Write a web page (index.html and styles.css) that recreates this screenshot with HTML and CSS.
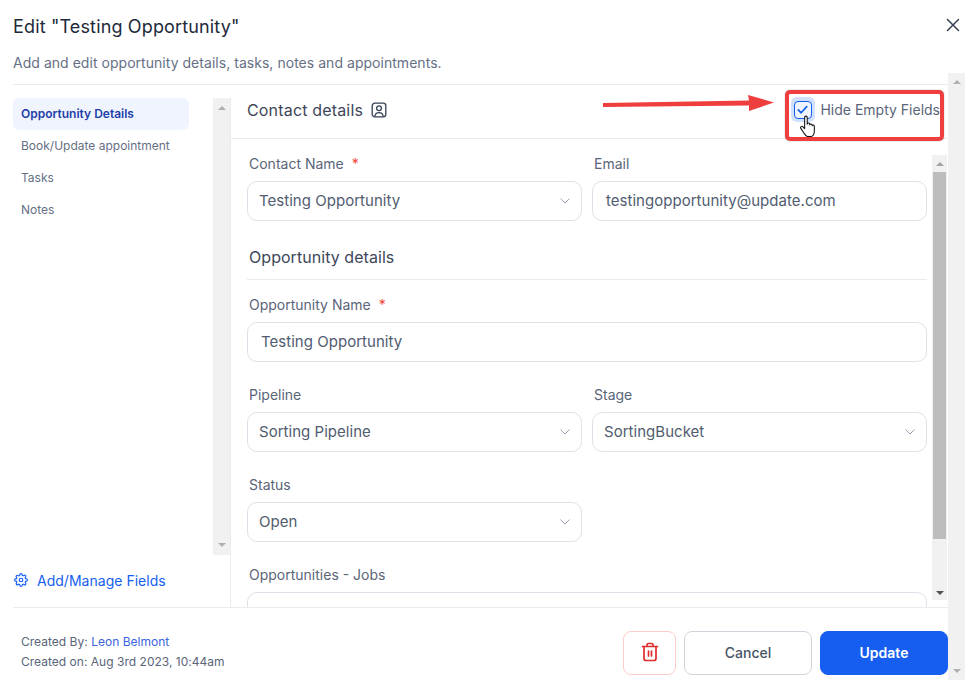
FILE: index.html
```html
<!DOCTYPE html>
<html lang="en">
<head>
<meta charset="utf-8">
<title>Edit Opportunity</title>
<link rel="stylesheet" href="styles.css">
</head>
<body>
<div class="page">
  <div class="modal">
    <header class="modal-head">
      <h1 class="title">Edit "Testing Opportunity"</h1>
      <p class="subtitle">Add and edit opportunity details, tasks, notes and appointments.</p>
    </header>
    <div class="modal-body">
      <aside class="side">
        <div class="side-inner">
          <div class="side-top">
            <nav class="nav">
              <a class="nav-item nav-active">Opportunity Details</a>
              <a class="nav-item">Book/Update appointment</a>
              <a class="nav-item">Tasks</a>
              <a class="nav-item">Notes</a>
            </nav>
            <div class="sb sb-side">
              <span class="tri tri-up"></span>
              <span class="tri tri-down"></span>
            </div>
          </div>
          <a class="manage">
            <svg class="gear" viewBox="0 0 24 24" fill="none" stroke="#155eef" stroke-width="2" stroke-linejoin="round"><circle cx="12" cy="12" r="3"/><path d="M19.4 15a1.65 1.65 0 0 0 .33 1.82l.06.06a2 2 0 1 1-2.83 2.83l-.06-.06a1.65 1.65 0 0 0-2.82 1.17V21a2 2 0 1 1-4 0v-.09A1.65 1.65 0 0 0 7.27 19.7l-.06.06a2 2 0 1 1-2.83-2.83l.06-.06a1.65 1.65 0 0 0-1.17-2.82H3a2 2 0 1 1 0-4h.09A1.65 1.65 0 0 0 4.3 7.27l-.06-.06a2 2 0 1 1 2.83-2.83l.06.06a1.65 1.65 0 0 0 2.82-1.17V3a2 2 0 1 1 4 0v.09a1.65 1.65 0 0 0 2.82 1.17l.06-.06a2 2 0 1 1 2.83 2.83l-.06.06a1.65 1.65 0 0 0 1.17 2.82H21a2 2 0 1 1 0 4h-.09a1.65 1.65 0 0 0-1.51 1.09z"/></svg>
            <span>Add/Manage Fields</span>
          </a>
        </div>
      </aside>
      <main class="main">
        <div class="main-head">
          <div class="contact-title">
            <span>Contact details</span>
            <svg class="contact-icon" viewBox="0 0 16 16" fill="none" stroke="#344054" stroke-width="1.300"><rect x="1.200" y="1.200" width="13.600" height="13.600" rx="2.600"/><circle cx="8" cy="6.200" r="2.400"/><path d="M3.800 14.400c.4-2.600 2-3.700 4.200-3.700s3.800 1.100 4.200 3.700"/></svg>
          </div>
          <label class="hide-empty">
            <span class="check-halo">
              <span class="check-box">
                <svg viewBox="0 0 16 16" fill="none" stroke="#155eef" stroke-width="1.800" stroke-linecap="round" stroke-linejoin="round"><path d="M3.500 8.500l3 3 6-6.500"/></svg>
              </span>
            </span>
            <span>Hide Empty Fields</span>
          </label>
        </div>
        <div class="scroll-pane">
          <form class="form">
            <div class="row">
              <div class="field">
                <div class="label">Contact Name <span class="req">*</span></div>
                <div class="input select"><span>Testing Opportunity</span><svg class="chev" viewBox="0 0 10 6" fill="none" stroke="#98a2b3" stroke-width="1"><path d="M.5.500 5 5 9.500.5"/></svg></div>
              </div>
              <div class="field">
                <div class="label">Email</div>
                <div class="input input-text">testingopportunity@update.com</div>
              </div>
            </div>
            <h2 class="section">Opportunity details</h2>
            <div class="field">
              <div class="label">Opportunity Name <span class="req">*</span></div>
              <div class="input input-text">Testing Opportunity</div>
            </div>
            <div class="row row-gap">
              <div class="field">
                <div class="label">Pipeline</div>
                <div class="input select"><span>Sorting Pipeline</span><svg class="chev" viewBox="0 0 10 6" fill="none" stroke="#98a2b3" stroke-width="1"><path d="M.5.500 5 5 9.500.5"/></svg></div>
              </div>
              <div class="field">
                <div class="label">Stage</div>
                <div class="input select"><span>SortingBucket</span><svg class="chev" viewBox="0 0 10 6" fill="none" stroke="#98a2b3" stroke-width="1"><path d="M.5.500 5 5 9.500.5"/></svg></div>
              </div>
            </div>
            <div class="row row-gap">
              <div class="field">
                <div class="label">Status</div>
                <div class="input select"><span>Open</span><svg class="chev" viewBox="0 0 10 6" fill="none" stroke="#98a2b3" stroke-width="1"><path d="M.5.500 5 5 9.500.5"/></svg></div>
              </div>
            </div>
            <div class="field row-gap">
              <div class="label">Opportunities - Jobs</div>
              <div class="input"></div>
            </div>
          </form>
          <div class="sb sb-inner">
            <span class="tri tri-up tri-dark"></span>
            <span class="thumb"></span>
            <span class="tri tri-down tri-dark"></span>
          </div>
        </div>
      </main>
    </div>
    <footer class="foot">
      <div class="meta">
        <div>Created By: <a class="meta-link">Leon Belmont</a></div>
        <div>Created on: Aug 3rd 2023, 10:44am</div>
      </div>
      <div class="actions">
        <button class="btn btn-del" type="button" aria-label="Delete">
          <svg viewBox="0 0 18 20" width="18" height="20" fill="none" stroke="#e02d2d" stroke-width="1.700" stroke-linecap="round" stroke-linejoin="round"><path d="M1.500 4.500h15M6 4.500V3a1.500 1.500 0 0 1 1.500-1.500h3A1.500 1.500 0 0 1 12 3v1.500M3 4.500v12A2 2 0 0 0 5 18.500h8a2 2 0 0 0 2-2v-12M7.500 9v5M10.500 9v5"/></svg>
        </button>
        <button class="btn btn-cancel" type="button">Cancel</button>
        <button class="btn btn-update" type="button">Update</button>
      </div>
    </footer>
  </div>
  <div class="right-rail">
    <svg class="close" viewBox="0 0 14 14" fill="none" stroke="#344054" stroke-width="1.500" stroke-linecap="round"><path d="M1.500 1.500l11 11M12.500 1.500l-11 11"/></svg>
    <div class="sb sb-outer">
      <span class="tri tri-up"></span>
      <span class="tri tri-down"></span>
    </div>
  </div>

  <div class="highlight"></div>
  <svg class="arrow" viewBox="0 0 180 20" fill="#ef3e3e"><path d="M0 9 L146 6.500 L145 1 L171 8.500 L146 17 L146 11.500 L0 13 Z"/></svg>
  <svg class="hand" viewBox="0 0 18 24" fill="#fff" stroke="#111" stroke-width="1.100" stroke-linejoin="round"><path d="M5.500 2.500c0-1.800 2.700-1.800 2.700 0v7c.3-1.600 2.600-1.500 2.600 0v.8c.3-1.400 2.500-1.300 2.500.2v.8c.4-1.200 2.300-1 2.300.5v5.200c0 2.800-1.600 5-3.200 5.500H8.200c-1.400-.6-2.500-2.300-3.600-3.900L1.500 14c-1-1.600.9-3 2.200-1.700l1.800 1.900z"/></svg>
</div>
</body>
</html>
```
FILE: styles.css
```css
* { box-sizing: border-box; }
html, body { margin: 0; padding: 0; }
body { background: #fff; font-family: Inter, "Liberation Sans", sans-serif; color: #344054; }
.page { position: relative; width: 973px; height: 694px; overflow: hidden; display: flex; background: #fff; }
.modal { width: 948px; padding-left: 13px; display: flex; flex-direction: column; height: 694px; }
.modal-head { height: 85px; border-bottom: 1px solid #e9ebef; padding-top: 16px; }
.title { margin: 0; font-size: 18px; line-height: 22px; font-weight: 400; letter-spacing: .15px; color: #1d2939; }
.subtitle { margin: 15px 0 0; font-size: 14px; line-height: 20px; font-weight: 400; letter-spacing: .035px; color: #667085; }

.modal-body { display: flex; height: 523px; border-bottom: 1px solid #e9ebef; }
.side { width: 218px; flex: none; padding-top: 13px; }
.side-inner { height: 100%; display: flex; flex-direction: column; border-right: 1px solid #e9ebef; }
.side-top { display: flex; height: 457px; }
.nav { width: 200px; display: flex; flex-direction: column; }
.nav-item { display: flex; align-items: center; width: 176px; height: 32px; padding: 0 0 2px 8px; font-size: 12px; color: #667085; border-radius: 6px; }
.nav-active { background: #eff4ff; color: #1f3fa8; font-weight: 600; }
.manage { display: flex; align-items: center; gap: 9px; margin-top: 15px; height: 20px; font-size: 14px; letter-spacing: .02px; color: #155eef; padding-left: 1px; }
.gear { width: 14px; height: 14px; }

.sb { display: flex; flex-direction: column; justify-content: space-between; align-items: center; background: #f1f1f1; width: 17px; flex: none; }
.sb-side { height: 457px; padding: 8px 0; }
.sb-inner { width: 15px; margin: 16px 1px 7px 5px; padding: 7px 0 5px; }
.sb-outer { height: 607px; margin-top: 41px; padding: 7px 0 7px; }
.tri { width: 0; height: 0; border-left: 4px solid transparent; border-right: 4px solid transparent; flex: none; }
.tri-up { border-bottom: 4px solid #b0b0b0; }
.tri-down { border-top: 4px solid #b0b0b0; }
.tri-up.tri-dark { border-bottom-color: #a3a3a3; }
.tri-down.tri-dark { border-top-color: #505050; }
.thumb { width: 13px; flex: 1; margin: 6px 0 52px; background: #bdbdbd; }

.main { flex: 1; min-width: 0; display: flex; flex-direction: column; }
.main-head { height: 54px; flex: none; display: flex; align-items: flex-start; justify-content: space-between; padding: 12px 8px 0 16px; border-bottom: 1px solid #e9ebef; }
.contact-title { display: flex; align-items: center; gap: 8px; height: 25px; font-size: 16px; font-weight: 400; letter-spacing: .17px; color: #3d4759; }
.contact-icon { width: 16px; height: 16px; }
.hide-empty { display: flex; align-items: center; gap: 5px; font-size: 14px; color: #5a6579; }
.check-halo { width: 24px; height: 25px; display: flex; align-items: center; justify-content: center; background: #d1e0ff; border-radius: 6px; }
.check-box { width: 18px; height: 18px; border: 1.500px solid #155eef; border-radius: 4px; background: #eff4ff; display: flex; }
.check-box svg { width: 15px; height: 15px; }

.scroll-pane { flex: 1; min-height: 0; display: flex; overflow: hidden; }
.form { width: 696px; flex: none; padding: 15px 0 0 16px; height: 600px; }
.row { display: grid; grid-template-columns: 335px 335px; column-gap: 10px; }
.row-gap { margin-top: 23px; }
.label { height: 20px; line-height: 20px; font-size: 14px; color: #5a6579; margin-bottom: 7px; padding-left: 2px; }
.req { color: #f04438; margin-left: 4px; }
.input { height: 40px; border: 1px solid #dfe1e8; border-radius: 10px; font-size: 15px; letter-spacing: .03px; color: #515c70; display: flex; align-items: center; padding-bottom: 2px; background: #fff; }
.select { justify-content: space-between; padding: 0 11px 2px 11px; }
.input-text { padding-left: 13px; }
.chev { width: 10px; height: 6px; margin-top: 2px; }
.section { margin: 26px 0 15px; padding: 0 0 12px 2px; font-size: 16px; line-height: 20px; font-weight: 400; letter-spacing: .05px; color: #3d4759; border-bottom: 1px solid #e9ebef; }

.foot { flex: 1; display: flex; justify-content: space-between; align-items: flex-start; padding: 23px 0 0 8px; }
.meta { font-size: 12px; line-height: 20px; padding-top: 1px; color: #5a6579; letter-spacing: .02px; }
.meta-link { color: #3a63e0; }
.actions { display: flex; gap: 8px; }
.btn { height: 44px; border-radius: 8px; font-family: inherit; font-size: 14px; cursor: pointer; background: #fff; display: flex; align-items: center; justify-content: center; padding: 0 0 2px; }
.btn-del { width: 53px; border: 1px solid #fecdca; }
.btn-cancel { width: 128px; border: 1px solid #d0d5dd; color: #475467; font-weight: 500; }
.btn-update { width: 128px; border: 1px solid #155eef; background: #155eef; color: #fff; font-weight: 600; }

.right-rail { width: 17px; flex: none; display: flex; flex-direction: column; }
.close { width: 14px; height: 14px; margin: 18px 0 0 -2px; flex: none; }

.highlight { position: absolute; left: 785px; top: 90px; width: 159px; height: 51px; border: 4px solid #ef3e3e; border-radius: 5px; box-shadow: 0 0 1px #555; }
.arrow { position: absolute; left: 603px; top: 94px; width: 180px; height: 20px; }
.hand { position: absolute; left: 799px; top: 115px; width: 18px; height: 23px; }
```
